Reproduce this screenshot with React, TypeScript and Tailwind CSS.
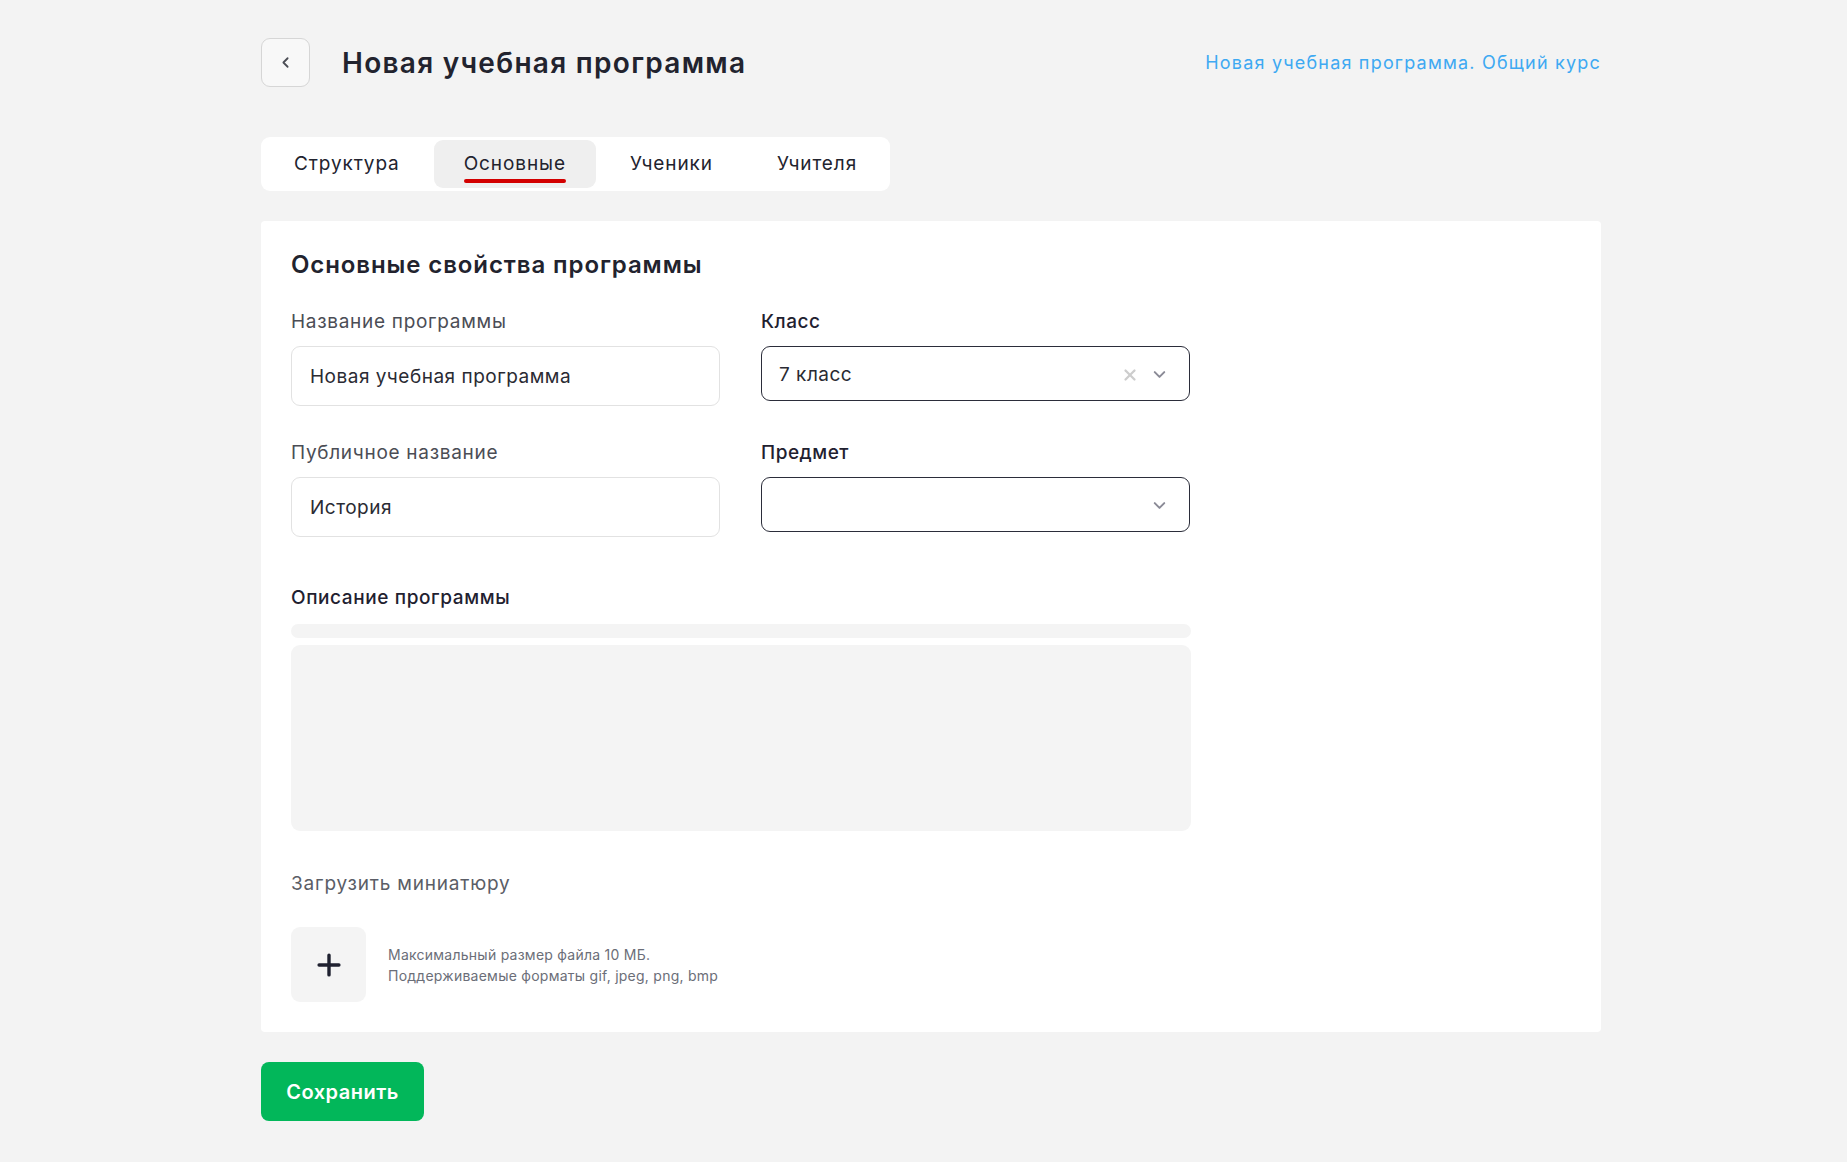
import { ChevronDown, ChevronLeft, Plus, X } from "lucide-react";

const tabs = ["Структура", "Основные", "Ученики", "Учителя"];

function TextField({ label, value }: { label: string; value: string }) {
  return (
    <div className="flex flex-col">
      <span className="mb-[10px] text-[19px] leading-[28px] tracking-[0.7px] text-[#4b4d55]">{label}</span>
      <div className="flex h-[60px] items-center rounded-[9px] border border-[#e2e2e2] px-[18px] pt-[2px] text-[19px] tracking-[0.5px] text-[#2a2b33]">
        {value}
      </div>
    </div>
  );
}

function SelectField({ label, value, clearable }: { label: string; value?: string; clearable?: boolean }) {
  return (
    <div className="flex flex-col">
      <span className="mb-[10px] text-[19px] font-medium leading-[28px] tracking-[0.5px] text-[#1f2130]">{label}</span>
      <div className="flex h-[55px] items-center rounded-[9px] border border-[#2b2d3a] pl-[17px] pr-[20px] pt-[2px] text-[19px] tracking-[0.5px] text-[#2a2b33]">
        <span className="flex-1 pt-[2px]">{value}</span>
        {clearable && <X size={18} strokeWidth={3} className="mr-[11px] text-[#cdcdcd]" />}
        <ChevronDown size={19} strokeWidth={2.5} className="text-[#8a8a96]" />
      </div>
    </div>
  );
}

export default function App() {
  return (
    <div className="min-h-screen bg-[#f3f3f3] font-['Inter',sans-serif] text-[#22232e]">
      <div className="ml-[261px] w-[1340px] pb-[40px] pt-[38px]">
        <div className="flex items-center justify-between">
          <div className="flex items-center gap-[32px]">
            <button className="flex h-[49px] w-[49px] items-center justify-center rounded-[9px] border border-[#d6d6d6] bg-[#f8f8f8] text-[#4b4d55]">
              <ChevronLeft size={17} strokeWidth={2.5} />
            </button>
            <h1 className="text-[28px] font-semibold tracking-[1.3px] text-[#22232e]">Новая учебная программа</h1>
          </div>
          <a className="text-[18px] tracking-[1.2px] text-[#3ea9f2]">Новая учебная программа. Общий курс</a>
        </div>

        <div className="mt-[50px] inline-flex gap-[4px] rounded-[9px] bg-white p-[3px]">
          {tabs.map((t) => {
            const active = t === "Основные";
            return (
              <div
                key={t}
                className={`flex h-[48px] flex-col items-center justify-center rounded-[9px] px-[30px] text-[19px] tracking-[0.9px] text-[#22232e] ${
                  active ? "bg-[#efefef]" : ""
                }`}
              >
                <span className="leading-[24px]">{t}</span>
                {active ? (
                  <span className="mt-[3px] -mb-[7px] h-[4px] w-full rounded-full bg-[#d30000]" />
                ) : null}
              </div>
            );
          })}
        </div>

        <div className="mt-[30px] rounded-[4px] bg-white px-[30px] pb-[30px] pt-[28px]">
          <h2 className="text-[24px] font-semibold leading-[32px] tracking-[0.9px] text-[#22232e]">Основные свойства программы</h2>

          <div className="mt-[27px] grid w-[899px] grid-cols-[429px_429px] gap-x-[41px] gap-y-[33px]">
            <TextField label="Название программы" value="Новая учебная программа" />
            <SelectField label="Класс" value="7 класс" clearable />
            <TextField label="Публичное название" value="История" />
            <SelectField label="Предмет" />
          </div>

          <div className="mt-[47px] w-[900px]">
            <div className="mb-[12px] text-[19px] font-medium leading-[28px] tracking-[0.6px] text-[#1f2130]">Описание программы</div>
            <div className="h-[14px] rounded-[7px] bg-[#f4f4f4]" />
            <div className="mt-[7px] h-[186px] rounded-[9px] bg-[#f4f4f4]" />
          </div>

          <div className="mt-[39px] text-[19px] leading-[28px] tracking-[0.8px] text-[#5a5d66]">Загрузить миниатюру</div>

          <div className="mt-[29px] flex items-center gap-[22px]">
            <button className="flex h-[75px] w-[75px] items-center justify-center rounded-[9px] bg-[#f4f4f4] text-[#1f2130]">
              <Plus size={34} strokeWidth={2.4} />
            </button>
            <div className="text-[14px] leading-[21px] tracking-[0.25px] text-[#6b6e78]">
              <div>Максимальный размер файла 10 МБ.</div>
              <div>Поддерживаемые форматы gif, jpeg, png, bmp</div>
            </div>
          </div>
        </div>

        <button className="mt-[30px] flex h-[59px] w-[163px] items-center justify-center rounded-[8px] bg-[#02b75a] text-[20px] font-semibold tracking-[0.5px] text-white">
          Сохранить
        </button>
      </div>
    </div>
  );
}
